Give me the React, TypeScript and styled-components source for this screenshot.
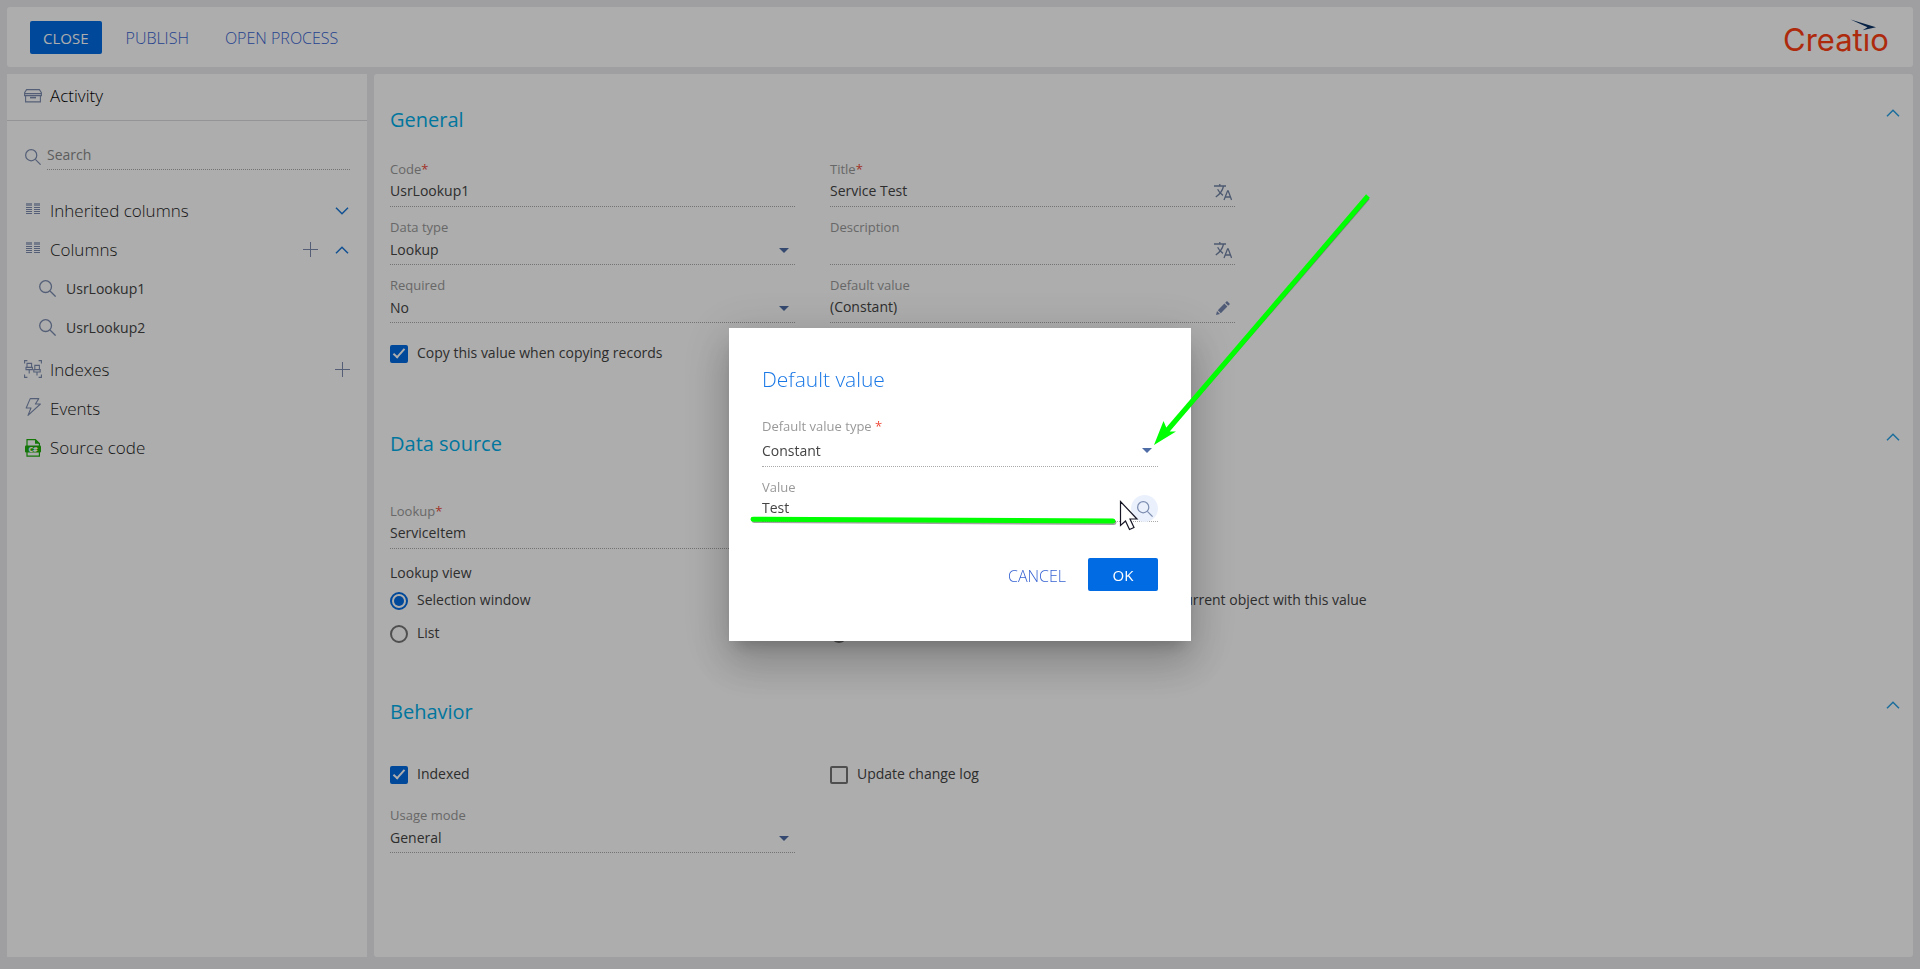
import React from 'react';
import styled, { createGlobalStyle, css } from 'styled-components';

const GlobalStyle = createGlobalStyle`
  *, *::before, *::after { box-sizing: border-box; }
  body {
    margin: 0;
    background: #eaebee;
    font-family: "Open Sans", "Noto Sans", sans-serif;
    font-size: 14px;
    line-height: 20px;
    color: #444;
  }
  button, input, select { font: inherit; color: inherit; }
`;

const Page = styled.div`
  display: flex;
  flex-direction: column;
  gap: 7px;
  min-height: 100vh;
  padding: 7px 7px 12px;
`;

const TopBar = styled.header`
  display: flex;
  align-items: center;
  justify-content: space-between;
  height: 60px;
  padding: 0 24px 0 23px;
  background: #fff;
  border-radius: 3px;
`;

const Actions = styled.div`
  display: flex;
  align-items: center;
  gap: 12px;
`;

const Button = styled.button<{ $primary?: boolean }>`
  height: 33px;
  padding: 2px 12px 0;
  border: 0;
  border-radius: 2px;
  background: transparent;
  color: #3763d2;
  font-size: 16px;
  font-weight: 300;
  line-height: 20px;
  cursor: pointer;
  ${(p) =>
    p.$primary &&
    css`
      min-width: 70px;
      padding: 1px 13px 0;
      background: #006be3;
      color: #fff;
      font-weight: 400;
      font-size: 15px;
    `}
`;

const Columns = styled.div`
  display: flex;
  flex: 1;
  gap: 7px;
`;

const Sidebar = styled.aside`
  flex: 0 0 360px;
  background: #fff;
`;

const SidebarTitle = styled.h1`
  display: flex;
  align-items: center;
  gap: 8px;
  height: 47px;
  margin: 0;
  padding: 0 17px 2px;
  border-bottom: 1px solid #dadbdd;
  color: #000;
  font-size: 17px;
  font-weight: 300;
`;

const SearchBox = styled.label`
  display: flex;
  align-items: center;
  gap: 6px;
  margin: 22px 17px 21px 18px;
`;

const SearchInput = styled.input`
  flex: 1;
  min-width: 0;
  height: 27px;
  padding: 0 0 3px;
  border: 0;
  border-bottom: 1px dotted #aaa;
  background: transparent;
  outline: 0;
  &::placeholder { color: #8a8a8a; opacity: 1; }
`;

const Tree = styled.ul`
  margin: 0;
  padding: 0 17px;
  list-style: none;
`;

const TreeRow = styled.li<{ $nested?: boolean }>`
  display: flex;
  align-items: center;
  gap: ${(p) => (p.$nested ? '10px' : '8px')};
  height: 39px;
  padding-left: ${(p) => (p.$nested ? '15px' : '0')};
  color: ${(p) => (p.$nested ? '#444' : '#1c1c1c')};
  font-size: ${(p) => (p.$nested ? '14px' : '17px')};
  font-weight: ${(p) => (p.$nested ? '400' : '300')};
`;

const TreeLabel = styled.span`
  flex: 1;
`;

const TreeGap = styled.li`
  height: 3px;
`;

const IconButton = styled.button`
  display: flex;
  align-items: center;
  justify-content: center;
  width: 16px;
  height: 16px;
  margin-left: 8px;
  padding: 0;
  border: 0;
  background: transparent;
`;

const Content = styled.main`
  flex: 1;
  min-width: 0;
  padding: 24px 12px 24px 16px;
  background: #fff;
  border-radius: 3px;
`;

const Section = styled.section<{ $gap: number; $top: number }>`
  display: grid;
  gap: ${(p) => p.$gap}px;
  margin-top: ${(p) => p.$top}px;
`;

const SectionHeader = styled.header`
  display: flex;
  justify-content: space-between;
  align-items: center;
  height: 44px;
`;

const SectionTitle = styled.h2`
  margin: 0;
  color: #00aeea;
  font-size: 20px;
  line-height: 28px;
  font-weight: 400;
`;

const CollapseButton = styled(IconButton)`
  align-self: flex-start;
  margin-top: 7px;
`;

const Form = styled.div`
  display: grid;
  grid-template-columns: 1fr 1fr;
  column-gap: 35px;
  align-items: start;
  width: 100%;
  max-width: 845px;
`;

const FieldBox = styled.div`
  padding-top: 11px;
`;

const FieldLabel = styled.label`
  display: block;
  height: 18px;
  color: #999;
  font-size: 13px;
  line-height: 18px;
`;

const Star = styled.span`
  color: #ee4b3a;
`;

const Control = styled.div<{ $height?: number }>`
  display: flex;
  align-items: center;
  height: ${(p) => p.$height ?? 29}px;
  border-bottom: 1px dotted #aaa;
`;

const bare = css`
  flex: 1;
  min-width: 0;
  height: 20px;
  padding: 0;
  border: 0;
  background: transparent;
  outline: 0;
  line-height: 20px;
`;

const TextInput = styled.input`
  ${bare}
  margin-bottom: 2px;
`;

const Select = styled.select`
  ${bare}
  appearance: none;
`;

const CaretSlot = styled.span`
  display: flex;
  padding-right: 6px;
`;

const FieldAction = styled(IconButton)`
  width: 18px;
  height: 18px;
  margin-right: 3px;
`;

const CheckLabel = styled.label<{ $height: number }>`
  display: flex;
  align-items: center;
  gap: 9px;
  height: ${(p) => p.$height}px;
  white-space: nowrap;
`;

const CheckText = styled.span`
  padding-bottom: 2px;
`;

const Tick = styled.input`
  display: grid;
  place-items: center;
  appearance: none;
  flex: none;
  width: 18px;
  height: 18px;
  margin: 0;
  border: 2px solid #757575;
  border-radius: 2px;
  &:checked {
    border-color: #006be3;
    background: #006be3;
  }
  &:checked::after {
    content: "";
    width: 6px;
    height: 12px;
    margin-top: -4px;
    border: solid #fff;
    border-width: 0 2px 2px 0;
    transform: rotate(42deg);
  }
`;

const Radio = styled.input`
  display: grid;
  place-items: center;
  appearance: none;
  flex: none;
  width: 18px;
  height: 18px;
  margin: 0;
  border: 2px solid #757575;
  border-radius: 50%;
  &:checked { border-color: #006be3; }
  &:checked::after {
    content: "";
    width: 10px;
    height: 10px;
    border-radius: 50%;
    background: #006be3;
  }
`;

const RadioGroup = styled.fieldset`
  min-width: 0;
  margin: 0;
  padding: 14px 0 0;
  border: 0;
`;

const Legend = styled.div`
  height: 21px;
`;

const Backdrop = styled.div`
  position: fixed;
  inset: 0;
  display: flex;
  align-items: center;
  justify-content: center;
  background: rgba(0, 0, 0, 0.32);
`;

const Dialog = styled.div`
  position: relative;
  width: 462px;
  padding: 37px 33px 50px;
  background: #fff;
  box-shadow:
    0 11px 15px -7px rgba(0, 0, 0, 0.2),
    0 24px 38px 3px rgba(0, 0, 0, 0.14),
    0 9px 46px 8px rgba(0, 0, 0, 0.12);
`;

const DialogTitle = styled.h2`
  margin: 0 0 13px;
  color: #1a78e6;
  font-size: 21px;
  line-height: 28px;
  font-weight: 300;
`;

const LookupButton = styled(IconButton)`
  width: 27px;
  height: 27px;
  border-radius: 50%;
  background: #ebf1fc;
`;

const DialogActions = styled.div`
  display: flex;
  justify-content: flex-end;
  gap: 10px;
  margin-top: 36px;
`;

const Annotation = styled.svg`
  position: absolute;
  top: 0;
  left: 0;
  overflow: visible;
  pointer-events: none;
`;

const LogoMark = styled.svg`
  overflow: visible;
`;

const ink = '#7c8db0';

const Caret = () => (
  <CaretSlot>
    <svg width="10" height="5" viewBox="0 0 10 5"><path d="M0 0h10L5 5z" fill="#4e6ca6" /></svg>
  </CaretSlot>
);

const Chevron = ({ up, color = '#1a78d8' }: { up?: boolean; color?: string }) => (
  <svg width="14" height="8" viewBox="0 0 14 8" fill="none" stroke={color} strokeWidth="1.5">
    <path d={up ? 'M1 7.2 7 1.2l6 6' : 'M1 .8l6 6 6-6'} />
  </svg>
);

const Plus = () => (
  <svg width="15" height="15" viewBox="0 0 15 15" stroke={ink} strokeWidth="1"><path d="M7.5 0v15M0 7.5h15" /></svg>
);

const Magnifier = ({ size = 17 }: { size?: number }) => (
  <svg width={size} height={size} viewBox="0 0 17 17" fill="none" stroke={ink} strokeWidth="1.3">
    <circle cx="6.6" cy="6.6" r="5.9" /><path d="M11 11l5.6 5.6" />
  </svg>
);

const ArchiveIcon = () => (
  <svg width="18" height="14" viewBox="0 0 18 14" fill="none" stroke={ink} strokeWidth="1.1">
    <path d="M2.6.6h12.8L17.4 3.6v3H.6v-3zM.6 4.6h16.8M1.6 6.6v6.3h14.8V6.6" />
    <path d="M6 8.6h6" strokeWidth="1.6" />
  </svg>
);

const ColumnsIcon = () => (
  <svg width="18" height="15" viewBox="0 0 18 15" stroke={ink} strokeWidth="1">
    <path d="M2 1.5h6M10 1.5h6" strokeWidth="3" strokeOpacity=".65" />
    <path d="M2 4.5h6M2 6.5h6M2 8.5h6M2 10.5h6M10 4.5h6M10 6.5h6M10 8.5h6M10 10.5h6" />
  </svg>
);

const IndexesIcon = () => (
  <svg width="18" height="20" viewBox="0 0 18 20" fill="none" stroke={ink} strokeWidth="1.1">
    <path d="M.6 3.4V.6h2.8M14.6.6h2.8v2.8M17.4 14.6v2.8h-2.8M3.4 17.4H.6v-2.8" />
    <path d="M3 3.4h4.6v4H3zM2 7.4h6.4v2.2H2zM5.2 9.6v3.8M10.8 5.4h4.6v4.2h-4.6zM9.8 9.6h6.4v2.4H9.8zM13 12v3.6" />
  </svg>
);

const BoltIcon = () => (
  <svg width="18" height="22" viewBox="0 0 18 22" fill="none" stroke={ink} strokeWidth="1.1" strokeLinejoin="round">
    <path d="M6.2.6h8.6l-3.4 5.4h5L4 17.4l3-7.4H2.2z" />
  </svg>
);

const SourceIcon = () => (
  <svg width="18" height="18" viewBox="0 0 18 18" fill="none">
    <path d="M3 .6h8.4l4 4v12.6H3z" stroke="#1fae0c" strokeWidth="1.2" />
    <path d="M11 .4v4.4h4.6z" fill="#1fae0c" />
    <rect x="1" y="6.6" width="16" height="7" rx="1" fill="#1fae0c" />
    <text x="9" y="12.5" fontFamily="Open Sans, sans-serif" fontSize="7" fontWeight="800" textAnchor="middle" fill="#fff">C#</text>
  </svg>
);

const TranslateIcon = () => (
  <svg width="18" height="17" viewBox="0 0 18 17" fill="none" stroke="#7284a6" strokeWidth="1.3">
    <path d="M0 2h12M5.8 0v2M9.6 2C8.6 6.2 5.6 10.4 1.8 13M3.6 5.2c1.2 2.4 3.2 4.8 5.4 6.2" />
    <path d="M10 16l3.6-9.2h.6L17.6 16M11.2 13h5.2" />
  </svg>
);

const PencilIcon = () => (
  <svg width="14" height="14" viewBox="0 0 14 14" fill="#7688b0">
    <path d="M0 14l1-4 3 3zM1.8 9.2l6.6-6.6 3 3-6.6 6.6zM9.2 1.8 11 0l3 3-1.8 1.8z" />
  </svg>
);

const Logo = () => (
  <LogoMark width="106" height="46" viewBox="0 0 106 46" role="img" aria-label="Creatio">
    <text x="0" y="37" fontFamily="Inter, sans-serif" fontSize="31" fontWeight="400" fill="#ff4013">Creatıo</text>
    <path d="M67.5 5.5L93 13.2 79.6 16.2 84.5 13.2z" fill="#0d3468" />
  </LogoMark>
);

type FieldProps = {
  id: string;
  label: string;
  value?: string;
  required?: boolean;
  select?: boolean;
  action?: React.ReactNode;
  height?: number;
  spaced?: boolean;
};

const Field = ({ id, label, value = '', required, select, action, height, spaced }: FieldProps) => (
  <FieldBox>
    <FieldLabel htmlFor={id}>
      {label}
      {required && <Star>{spaced ? ' *' : '*'}</Star>}
    </FieldLabel>
    <Control $height={height}>
      {select ? (
        <>
          <Select id={id} defaultValue={value}><option>{value}</option></Select>
          <Caret />
        </>
      ) : (
        <TextInput id={id} defaultValue={value} />
      )}
      {action}
    </Control>
  </FieldBox>
);

const Check = ({ label, checked, height }: { label: string; checked?: boolean; height: number }) => (
  <CheckLabel $height={height}>
    <Tick type="checkbox" defaultChecked={checked} />
    <CheckText>{label}</CheckText>
  </CheckLabel>
);

const RadioOption = ({ label, name, checked }: { label: string; name: string; checked?: boolean }) => (
  <CheckLabel $height={33}>
    <Radio type="radio" name={name} defaultChecked={checked} />
    <CheckText>{label}</CheckText>
  </CheckLabel>
);

const Translate = () => <FieldAction aria-label="Translate"><TranslateIcon /></FieldAction>;

const Header = ({ title }: { title: string }) => (
  <SectionHeader>
    <SectionTitle>{title}</SectionTitle>
    <CollapseButton aria-label={`Collapse ${title}`}><Chevron up color="#2aa3e6" /></CollapseButton>
  </SectionHeader>
);

export default function App() {
  return (
    <>
      <GlobalStyle />
      <Page>
        <TopBar>
          <Actions>
            <Button $primary>CLOSE</Button>
            <Button>PUBLISH</Button>
            <Button>OPEN PROCESS</Button>
          </Actions>
          <Logo />
        </TopBar>
        <Columns>
          <Sidebar>
            <SidebarTitle><ArchiveIcon />Activity</SidebarTitle>
            <SearchBox>
              <Magnifier size={16} />
              <SearchInput placeholder="Search" aria-label="Search" />
            </SearchBox>
            <Tree>
              <TreeRow>
                <ColumnsIcon /><TreeLabel>Inherited columns</TreeLabel>
                <IconButton aria-label="Expand inherited columns"><Chevron /></IconButton>
              </TreeRow>
              <TreeRow>
                <ColumnsIcon /><TreeLabel>Columns</TreeLabel>
                <IconButton aria-label="Add column"><Plus /></IconButton>
                <IconButton aria-label="Collapse columns"><Chevron up /></IconButton>
              </TreeRow>
              <TreeRow $nested><Magnifier /><TreeLabel>UsrLookup1</TreeLabel></TreeRow>
              <TreeRow $nested><Magnifier /><TreeLabel>UsrLookup2</TreeLabel></TreeRow>
              <TreeGap />
              <TreeRow>
                <IndexesIcon /><TreeLabel>Indexes</TreeLabel>
                <IconButton aria-label="Add index"><Plus /></IconButton>
              </TreeRow>
              <TreeRow><BoltIcon /><TreeLabel>Events</TreeLabel></TreeRow>
              <TreeRow><SourceIcon /><TreeLabel>Source code</TreeLabel></TreeRow>
            </Tree>
          </Sidebar>
          <Content>
            <Section $gap={7} $top={0}>
              <Header title="General" />
              <Form>
                <Field id="code" label="Code" value="UsrLookup1" required />
                <Field id="title" label="Title" value="Service Test" required action={<Translate />} />
                <Field id="type" label="Data type" value="Lookup" select />
                <Field id="description" label="Description" action={<Translate />} />
                <Field id="required" label="Required" value="No" select />
                <Field
                  id="default"
                  label="Default value"
                  value="(Constant)"
                  action={<FieldAction aria-label="Edit default value"><PencilIcon /></FieldAction>}
                />
                <Check label="Copy this value when copying records" checked height={62} />
              </Form>
            </Section>
            <Section $gap={25} $top={37}>
              <Header title="Data source" />
              <Form>
                <Field id="lookup" label="Lookup" value="ServiceItem" required />
                <span />
                <RadioGroup aria-label="Lookup view">
                  <Legend>Lookup view</Legend>
                  <RadioOption name="view" label="Selection window" checked />
                  <RadioOption name="view" label="List" />
                </RadioGroup>
                <RadioGroup aria-label="On lookup value deletion">
                  <Legend>On lookup value deletion</Legend>
                  <RadioOption
                    name="deletion"
                    label="Cancel deletion if there are connected records in current object with this value"
                    checked
                  />
                  <RadioOption name="deletion" label="Delete all connected records with this value" />
                </RadioGroup>
              </Form>
            </Section>
            <Section $gap={21} $top={40}>
              <Header title="Behavior" />
              <Form>
                <Check label="Indexed" checked height={40} />
                <Check label="Update change log" height={40} />
                <Field id="usage" label="Usage mode" value="General" select />
              </Form>
            </Section>
          </Content>
        </Columns>
      </Page>
      <Backdrop>
        <Dialog role="dialog" aria-labelledby="dialog-title">
          <DialogTitle id="dialog-title">Default value</DialogTitle>
          <Field id="value-type" label="Default value type" value="Constant" required spaced select height={32} />
          <Field
            id="value"
            label="Value"
            value="Test"
            height={26}
            action={<LookupButton aria-label="Choose value"><Magnifier size={16} /></LookupButton>}
          />
          <DialogActions>
            <Button>CANCEL</Button>
            <Button $primary>OK</Button>
          </DialogActions>
          <Annotation width="462" height="313" viewBox="0 0 462 313" aria-hidden="true">
            <g transform="translate(1 1)" fill="#333" stroke="#333" opacity=".45">
              <path d="M24 191.5l360 2" strokeWidth="5" strokeLinecap="round" />
              <path d="M638-131 437 102" strokeWidth="4" />
            </g>
            <path d="M24 191.2l360 1.8" stroke="#0f0" strokeWidth="5" strokeLinecap="round" />
            <path d="M639-132 436 105" stroke="#0f0" strokeWidth="5" />
            <path d="M425 117l9.5-24 3 7 3.5 3.5 6 0z" fill="#0f0" />
            <path
              d="M391.5 173.5v24l5-4.5 4 8.5 4.5-2-4-8.5h7z"
              fill="#fff"
              stroke="#151525"
              strokeWidth="1.2"
            />
          </Annotation>
        </Dialog>
      </Backdrop>
    </>
  );
}
